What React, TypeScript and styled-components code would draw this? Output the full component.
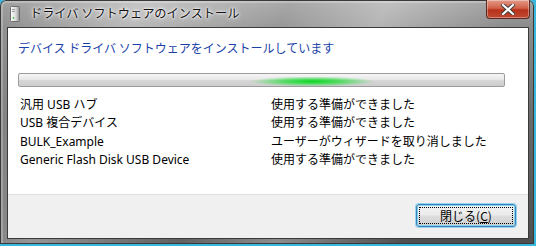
import { Fragment } from "react";
import styled, { createGlobalStyle } from "styled-components";

const GlobalStyle = createGlobalStyle`
  html, body {
    margin: 0;
    padding: 0;
    background: #3ab7dc;
  }
  body {
    width: 536px;
    height: 246px;
    overflow: hidden;
  }
`;

const Window = styled.div`
  box-sizing: border-box;
  width: 534px;
  height: 244px;
  padding: 0 5px 5px 7px;
  display: flex;
  flex-direction: column;
  border-radius: 6px 6px 0 0;
  background:
    linear-gradient(115deg, rgba(255, 255, 255, 0) 0%, rgba(255, 255, 255, 0.4) 22%, rgba(255, 255, 255, 0.1) 45%, rgba(255, 255, 255, 0.35) 60%, rgba(255, 255, 255, 0) 80%),
    linear-gradient(180deg, #a0a0a0 0px, #8c8c8c 27px, #6a6a6a 120px, #4e4e4e 100%);
  box-shadow: inset 0 0 0 1px #3a3a3a, inset 1px 1px 0 2px rgba(255, 255, 255, 0.25);
`;

const TitleBar = styled.div`
  height: 27px;
  display: flex;
  align-items: flex-start;
`;

const TitleIcon = styled.svg`
  margin: 6px 0 0 3px;
  flex: none;
`;

const TitleText = styled.div`
  margin: 5px 0 0 10px;
  font-family: "Noto Sans CJK JP", sans-serif;
  font-size: 12.2px;
  line-height: 17px;
  color: #111;
  text-shadow: 0 0 6px #fff, 0 0 3px #fff, 0 0 2px #fff;
  flex: 1;
`;

const CloseButton = styled.div`
  box-sizing: border-box;
  width: 44px;
  height: 19px;
  margin-right: -1px;
  display: flex;
  align-items: center;
  justify-content: center;
  border: 1px solid #5a2a22;
  border-top: none;
  border-radius: 0 0 4px 4px;
  background: linear-gradient(180deg, #e29a88 0%, #d2614a 45%, #b8321c 55%, #c0482e 100%);
  box-shadow: inset 0 0 0 1px rgba(255, 255, 255, 0.35);
`;

const Client = styled.div`
  flex: 1;
  display: flex;
  flex-direction: column;
  background: #fff;
  border: 1px solid #3a3a3a;
  font-family: "Noto Sans", "Noto Sans CJK JP", sans-serif;
  font-size: 12px;
  color: #000;
`;

const Heading = styled.div`
  margin: 11px 0 0 10px;
  font-family: "Noto Sans CJK JP", sans-serif;
  font-size: 12px;
  line-height: 18px;
  color: #1c3fa8;
`;

const Progress = styled.div`
  box-sizing: border-box;
  width: 487px;
  height: 14px;
  margin: 16px 0 0 10px;
  border: 1px solid #9c9c9c;
  border-radius: 2px;
  background:
    radial-gradient(ellipse 62px 5px at 60.5% 62%, rgba(10, 215, 35, 1) 0%, rgba(50, 220, 70, 0.8) 45%, rgba(120, 230, 120, 0) 100%),
    linear-gradient(180deg, #f6f6f6 0%, #e8e8e8 45%, #d6d6d6 55%, #cdcdcd 100%);
`;

const List = styled.div`
  margin: 9px 0 0 12px;
  display: grid;
  grid-template-columns: 251px auto;
  line-height: 18.3px;
`;

const Cell = styled.div`
  white-space: nowrap;
`;

const Footer = styled.div`
  margin-top: auto;
  height: 44px;
  box-sizing: border-box;
  border-top: 1px solid #dfdfdf;
  background: #f0f0f0;
  display: flex;
  justify-content: flex-end;
  align-items: flex-start;
  padding: 9px 12px 0 0;
`;

const Button = styled.div`
  box-sizing: border-box;
  width: 100px;
  height: 23px;
  padding: 2px;
  border: 1px solid #3c7fb1;
  border-radius: 3px;
  box-shadow: 0 0 0 1px rgba(80, 190, 240, 0.55), inset 0 0 0 1px #7fd3f6;
  background: linear-gradient(180deg, #f2f2f2 0%, #ebebeb 48%, #dddddd 52%, #cfcfcf 100%);
`;

const ButtonFace = styled.div`
  height: 100%;
  box-sizing: border-box;
  border: 1px dotted #000;
  display: flex;
  align-items: center;
  justify-content: center;
  font-family: "Noto Sans CJK JP", sans-serif;
  font-size: 12px;
  color: #000;
`;

const rows = [
  ["汎用 USB ハブ", "使用する準備ができました"],
  ["USB 複合デバイス", "使用する準備ができました"],
  ["BULK_Example", "ユーザーがウィザードを取り消しました"],
  ["Generic Flash Disk USB Device", "使用する準備ができました"],
];

export default function App() {
  return (
    <>
      <GlobalStyle />
      <Window>
        <TitleBar>
          <TitleIcon width="10" height="16" viewBox="0 0 10 16">
            <defs>
              <linearGradient id="tower" x1="0" x2="1">
                <stop offset="0" stopColor="#ffffff" />
                <stop offset="0.6" stopColor="#d8d8d8" />
                <stop offset="1" stopColor="#8a8a8a" />
              </linearGradient>
            </defs>
            <rect x="0.5" y="0.5" width="9" height="15" rx="1" fill="url(#tower)" stroke="#6d6d6d" />
            <rect x="2" y="3" width="3" height="1" fill="#9a9a9a" />
            <rect x="2" y="5" width="3" height="1" fill="#9a9a9a" />
            <circle cx="3.5" cy="12" r="0.9" fill="#4bc24b" />
          </TitleIcon>
          <TitleText>ドライバ ソフトウェアのインストール</TitleText>
          <CloseButton>
            <svg width="14" height="11" viewBox="0 0 14 11">
              <path
                d="M2 1 L12 10 M12 1 L2 10"
                stroke="#3a3a3a"
                strokeWidth="4"
                strokeLinecap="square"
              />
              <path
                d="M2 1 L12 10 M12 1 L2 10"
                stroke="#ffffff"
                strokeWidth="2.2"
                strokeLinecap="square"
              />
            </svg>
          </CloseButton>
        </TitleBar>
        <Client>
          <Heading>デバイス ドライバ ソフトウェアをインストールしています</Heading>
          <Progress />
          <List>
            {rows.map(([name, status]) => (
              <Fragment key={name}>
                <Cell>{name}</Cell>
                <Cell>{status}</Cell>
              </Fragment>
            ))}
          </List>
          <Footer>
            <Button>
              <ButtonFace>
                閉じる(<u>C</u>)
              </ButtonFace>
            </Button>
          </Footer>
        </Client>
      </Window>
    </>
  );
}
